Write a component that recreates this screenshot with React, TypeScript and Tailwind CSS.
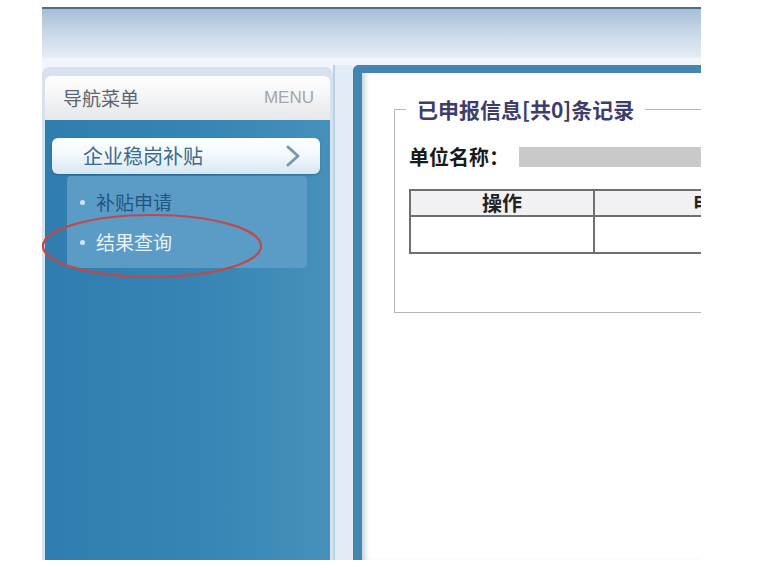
import React from "react";

const cjk = { fontFamily: '"Noto Sans CJK SC", "Liberation Sans", sans-serif' };

function Chevron() {
  return (
    <svg width="16" height="22" viewBox="0 0 16 22" className="mr-[19px]">
      <path d="M3 2 L13 11 L3 20" fill="none" stroke="#7d96ad" strokeWidth="3" strokeLinecap="round" strokeLinejoin="round" />
    </svg>
  );
}

function Sidebar() {
  return (
    <div className="mt-[2px] w-[291px] shrink-0 flex flex-col rounded-t-[8px] bg-[#d6e2ed] px-[3px] pt-[9px]">
      {/* header */}
      <div className="h-[44px] shrink-0 flex items-center justify-between rounded-t-[6px] bg-gradient-to-b from-white to-[#e6e8ea] pl-[18px] pr-[16px]">
        <span className="text-[19px] text-[#5b6672]" style={cjk}>导航菜单</span>
        <span className="text-[17px] text-[#a3a6aa]" style={{ fontFamily: '"Liberation Sans", sans-serif' }}>MENU</span>
      </div>
      {/* body */}
      <div className="flex-1 bg-gradient-to-r from-[#2f7eaf] via-[#3584b4] to-[#4690bb] pt-[18px]">
        <div className="ml-[7px] mr-[10px] h-[36px] flex items-center justify-between rounded-[6px] bg-gradient-to-b from-white via-[#f1f7fb] to-[#d6e7f2] shadow-[0_1px_2px_rgba(0,40,80,0.3)] pl-[31px]">
          <span className="text-[20px] text-[#3a6a8e]" style={cjk}>企业稳岗补贴</span>
          <Chevron />
        </div>
        <div className="ml-[22px] mt-[2px] w-[240px] h-[92px] rounded-[4px] bg-[#5a9cc6] pl-[13px] pt-[6px]">
          <div className="h-10 flex items-center gap-[11px]">
            <span className="w-[5px] h-[5px] rounded-full bg-[#cfe3f3]" />
            <span className="text-[19px] text-[#1f5684]" style={cjk}>补贴申请</span>
          </div>
          <div className="h-10 flex items-center gap-[11px]">
            <span className="w-[5px] h-[5px] rounded-full bg-[#cfe3f3]" />
            <span className="text-[19px] text-[#eaf2f9]" style={cjk}>结果查询</span>
          </div>
        </div>
      </div>
    </div>
  );
}

function MainPanel() {
  return (
    <div className="flex-1 min-w-0 rounded-tl-[6px] border-l-[9px] border-t-[8px] border-[#4586b0] bg-white shadow-[inset_6px_0_6px_-4px_rgba(40,90,130,0.35)]">
      <fieldset className="mt-[22px] ml-[32px] w-[540px] border border-[#b6b6b6] pl-[14px] pb-[58px]" style={cjk}>
        <legend className="-ml-[3px] px-[11px] text-[21px] leading-[28px] font-bold text-[#3d3d6c]">已申报信息[共0]条记录</legend>
        <div className="pt-[20px] flex items-center text-[20px] leading-[28px] font-bold text-[#1a1a1a]">
          <span>单位名称：</span>
          <span className="ml-[10px] h-[20px] w-[220px] bg-[#c9c9c9]" />
        </div>
        <table className="mt-[18px] border-collapse border-2 border-[#6f6f6f] text-[20px]">
          <thead>
            <tr className="h-[26px] bg-[#f1f1f3]">
              <th className="w-[184px] border-2 border-[#6f6f6f] leading-[22px] font-bold text-[#222]">操作</th>
              <th className="w-[278px] border-2 border-[#6f6f6f] leading-[22px] font-bold text-[#222]">申报时间</th>
            </tr>
          </thead>
          <tbody>
            <tr className="h-[37px]">
              <td className="border-2 border-[#6f6f6f]" />
              <td className="border-2 border-[#6f6f6f]" />
            </tr>
          </tbody>
        </table>
      </fieldset>
    </div>
  );
}

export default function App() {
  return (
    <div className="relative w-[770px] h-[568px] bg-white overflow-hidden">
      <div className="ml-[42px] mt-[7px] w-[659px] h-[553px] overflow-hidden flex flex-col">
        {/* top banner */}
        <div className="h-[51px] shrink-0 border-t-2 border-[#4f6e87] bg-gradient-to-b from-[#a7bfd6] via-[#c9d8e7] to-[#e6eef6]" />
        <div className="flex-1 flex bg-[#f2f6fa] pt-[7px]">
          <Sidebar />
          <div className="w-[20px] shrink-0 border-l-2 border-[#b9d1e6] bg-[#e2ecf6]" />
          <MainPanel />
        </div>
      </div>
      {/* red annotation ellipse */}
      <svg className="absolute left-[40px] top-[211px]" width="226" height="70" viewBox="0 0 226 70">
        <ellipse cx="112" cy="35" rx="109" ry="31" fill="none" stroke="#c0484a" strokeWidth="2.2" />
      </svg>
    </div>
  );
}
